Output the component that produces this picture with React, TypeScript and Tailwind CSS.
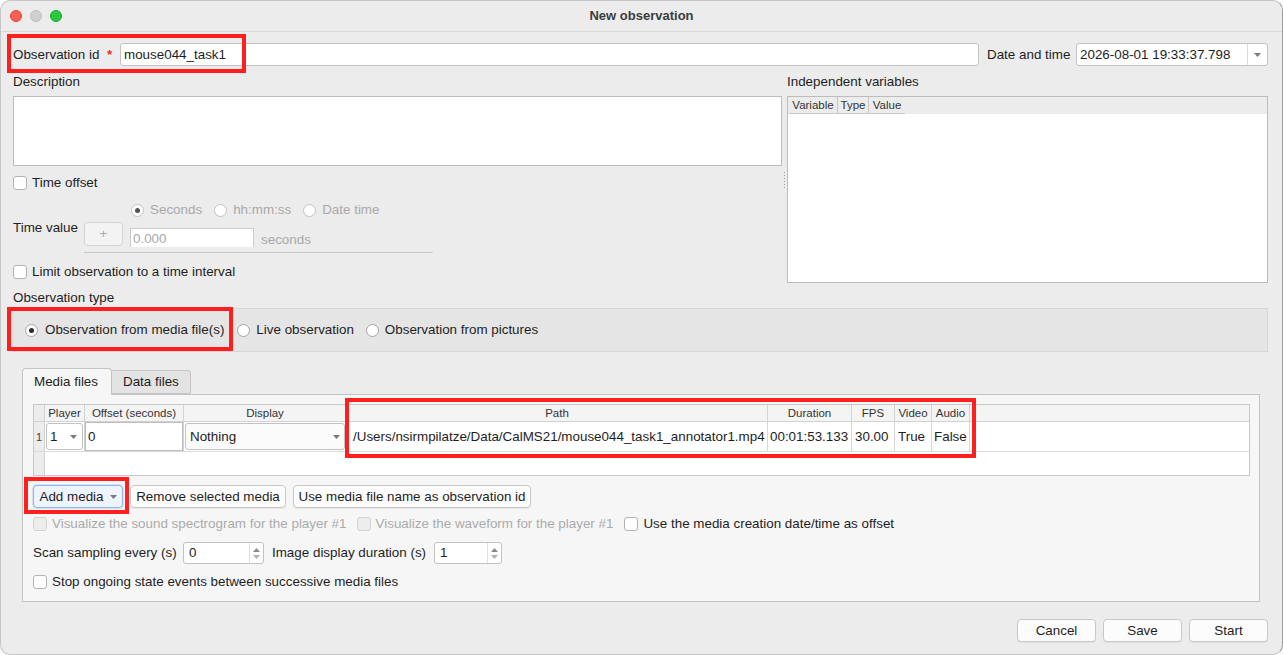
import React from "react";

const Check = ({ disabled = false }: { disabled?: boolean }) => (
  <span
    className={
      "inline-block w-[14px] h-[14px] rounded-[3px] border shrink-0 " +
      (disabled ? "bg-[#ededed] border-[#d2d2d2]" : "bg-white border-[#b3b3b3]")
    }
  />
);

const Radio = ({ checked = false, disabled = false }: { checked?: boolean; disabled?: boolean }) => (
  <span
    className={
      "inline-flex items-center justify-center w-[13px] h-[13px] rounded-full border shrink-0 " +
      (disabled ? "bg-white border-[#c4c4c4]" : "bg-white border-[#a6a6a6]")
    }
  >
    {checked && (
      <span className={"w-[5px] h-[5px] rounded-full " + (disabled ? "bg-[#555]" : "bg-[#2a2a2a]")} />
    )}
  </span>
);

const Caret = ({ className = "" }: { className?: string }) => (
  <svg width="7" height="4" viewBox="0 0 7 4" className={className}>
    <path d="M0 0 L7 0 L3.5 4 Z" fill="#7a7a7a" />
  </svg>
);

const SpinArrows = () => (
  <div className="flex flex-col items-center justify-center gap-[3px] w-[14px] h-full border-l border-[#e0e0e0]">
    <svg width="7" height="4" viewBox="0 0 7 4">
      <path d="M0 4 L7 4 L3.5 0 Z" fill="#8a8a8a" />
    </svg>
    <svg width="7" height="4" viewBox="0 0 7 4">
      <path d="M0 0 L7 0 L3.5 4 Z" fill="#b0b0b0" />
    </svg>
  </div>
);

const Btn = ({ w, children }: { w: string; children: React.ReactNode }) => (
  <div
    className={
      "h-[23px] flex items-center justify-center rounded-[4px] border border-[#c8c8c8] bg-[#fcfcfc] shadow-[0_1px_0_rgba(0,0,0,0.05)] whitespace-nowrap " +
      w
    }
  >
    {children}
  </div>
);

export default function App() {
  return (
    <div className="w-[1283px] h-[655px] bg-white">
      <div className="relative w-[1283px] h-[655px] bg-[#ececec] rounded-[10px] border border-[#c6c6c6] border-r-[#9c9c9c] overflow-hidden text-[13.4px] leading-[16px] text-[#1e1e1e] font-['Liberation_Sans',Arial,sans-serif]">
        {/* Title bar */}
        <div className="h-[31px] grid grid-cols-[1fr_auto_1fr] items-center border-b border-[#d8d8d8]">
          <div className="flex items-center gap-[8px] pl-[9px]">
            <span className="w-[12px] h-[12px] rounded-full bg-[#fe5f57] border border-[#e2463f]" />
            <span className="w-[12px] h-[12px] rounded-full bg-[#cfcfcf] border border-[#bdbdbd]" />
            <span className="w-[12px] h-[12px] rounded-full bg-[#2ac840] border border-[#1eaa30]" />
          </div>
          <div className="font-bold text-[#3c3c3c] text-[13px]">New observation</div>
          <div />
        </div>

        <div className="pl-[12px] pr-[14px]">
          {/* Row 1 */}
          <div className="mt-[11px] h-[23px] flex items-center">
            <span className="w-[94px] whitespace-nowrap">Observation id</span>
            <span className="w-[13px] text-[#e2362c] font-bold">*</span>
            <div className="flex-1 h-[23px] bg-white border border-[#c2c2c2] rounded-[3px] flex items-center pl-[3px]">
              mouse044_task1
            </div>
            <span className="ml-[8px] w-[81px] whitespace-nowrap">Date and time</span>
            <div className="ml-[8px] w-[192px] h-[23px] bg-white border border-[#c2c2c2] rounded-[3px] flex items-center">
              <span className="flex-1 pl-[3px] whitespace-nowrap">2026-08-01 19:33:37.798</span>
              <div className="w-[20px] h-full border-l border-[#dcdcdc] flex items-center justify-center">
                <Caret />
              </div>
            </div>
          </div>

          {/* Row 2 */}
          <div className="mt-[8px] flex">
            <div className="w-[769px] flex flex-col">
              <div className="h-[16px]">Description</div>
              <div className="mt-[6px] h-[70px] bg-white border border-[#bcbcbc]" />
              <div className="mt-[10px] h-[14px] flex items-center gap-[5px]">
                <Check />
                <span>Time offset</span>
              </div>
              <div className="mt-[11px] flex">
                <div className="w-[71px] pt-[19px]">Time value</div>
                <div className="w-[349px] h-[52px] border-b border-[#c9c9c9]">
                  <div className="h-[18px] flex items-center pl-[47px] gap-[12px] text-[#a9a9a9]">
                    <span className="flex items-center gap-[6px]">
                      <Radio checked disabled />
                      Seconds
                    </span>
                    <span className="flex items-center gap-[6px]">
                      <Radio disabled />
                      hh:mm:ss
                    </span>
                    <span className="flex items-center gap-[6px]">
                      <Radio disabled />
                      Date time
                    </span>
                  </div>
                  <div className="mt-[3px] h-[25px] overflow-hidden flex items-start">
                    <div className="w-[39px] h-[24px] rounded-[4px] border border-[#d4d4d4] bg-[#f3f3f3] flex items-center justify-center text-[#a9a9a9]">
                      +
                    </div>
                    <div className="ml-[7px] mt-[6px] w-[124px] h-[24px] bg-white border border-[#cccccc] pl-[2px] pt-[2px] text-[#a9a9a9]">
                      0.000
                    </div>
                    <span className="ml-[7px] mt-[10px] text-[#a9a9a9]">seconds</span>
                  </div>
                </div>
              </div>
              <div className="mt-[12px] h-[14px] flex items-center gap-[5px]">
                <Check />
                <span>Limit observation to a time interval</span>
              </div>
            </div>
            <div className="w-[5px] flex flex-col items-center pt-[98px] gap-[2px]">
              {[0, 1, 2, 3, 4, 5].map((i) => (
                <span key={i} className="w-[1px] h-[1px] bg-[#9a9a9a]" />
              ))}
            </div>
            <div className="w-[481px] flex flex-col">
              <div className="h-[16px]">Independent variables</div>
              <div className="mt-[6px] h-[187px] border border-[#bcbcbc] bg-white flex flex-col">
                <div className="h-[17px] bg-[#ececec] flex pl-[1px] text-[11.5px] text-[#333]">
                  <div className="w-[49px] border-r border-b border-[#c6c6c6] flex items-center justify-center">Variable</div>
                  <div className="w-[31px] border-r border-b border-[#c6c6c6] flex items-center justify-center">Type</div>
                  <div className="w-[36px] border-b border-[#c6c6c6] flex items-center justify-center">Value</div>
                </div>
              </div>
            </div>
          </div>

          {/* Observation type */}
          <div className="mt-[7px] h-[16px]">Observation type</div>
          <div className="mt-[2px] ml-[-1px] h-[44px] bg-[#e5e5e5] border border-[#d6d6d6] flex items-center pl-[12px]">
            <span className="flex items-center gap-[7px]">
              <Radio checked />
              Observation from media file(s)
            </span>
            <span className="ml-[13px] flex items-center gap-[6px]">
              <Radio />
              Live observation
            </span>
            <span className="ml-[12px] flex items-center gap-[6px]">
              <Radio />
              Observation from pictures
            </span>
          </div>

          {/* Tab widget */}
          <div className="mt-[16px] ml-[9px] w-[1238px]">
            <div className="h-[26px] flex items-end">
              <div className="relative z-10 w-[90px] h-[27px] mb-[-1px] bg-[#f6f6f6] border border-b-0 border-[#c4c4c4] rounded-t-[4px] pl-[11px] flex items-center">
                Media files
              </div>
              <div className="w-[79px] h-[24px] bg-[#e3e3e3] border border-l-0 border-[#c4c4c4] rounded-tr-[4px] pl-[11px] flex items-center">
                Data files
              </div>
            </div>
            <div className="h-[208px] bg-[#f6f6f6] border border-[#c4c4c4] flex flex-col pl-[10px] pr-[9px]">
              {/* Media table */}
              <div className="mt-[9px] h-[72px] border border-[#c8c8c8] bg-white flex flex-col">
                <div className="h-[17px] flex bg-[#f4f4f4] border-b border-[#d2d2d2] text-[11.5px] text-[#333] whitespace-nowrap">
                  <div className="w-[11px] border-r border-[#d2d2d2] bg-[#ececec]" />
                  <div className="w-[40px] border-r border-[#d2d2d2] flex items-center justify-center">Player</div>
                  <div className="w-[99px] border-r border-[#d2d2d2] flex items-center justify-center">Offset (seconds)</div>
                  <div className="w-[163px] border-r border-[#d2d2d2] flex items-center justify-center">Display</div>
                  <div className="w-[421px] border-r border-[#d2d2d2] flex items-center justify-center">Path</div>
                  <div className="w-[84px] border-r border-[#d2d2d2] flex items-center justify-center">Duration</div>
                  <div className="w-[43px] border-r border-[#d2d2d2] flex items-center justify-center">FPS</div>
                  <div className="w-[37px] border-r border-[#d2d2d2] flex items-center justify-center">Video</div>
                  <div className="w-[38px] border-r border-[#d2d2d2] flex items-center justify-center">Audio</div>
                </div>
                <div className="h-[30px] flex border-b border-[#dadada] whitespace-nowrap">
                  <div className="w-[11px] bg-[#ececec] border-r border-[#d2d2d2] flex items-center justify-center text-[11px] text-[#444]">
                    1
                  </div>
                  <div className="w-[40px] border-r border-[#d2d2d2] p-[1px] flex">
                    <div className="flex-1 bg-white border border-[#c2c2c2] rounded-[3px] flex items-center pl-[3px]">
                      <span className="flex-1">1</span>
                      <Caret className="mr-[5px]" />
                    </div>
                  </div>
                  <div className="w-[99px] border-r border-[#d2d2d2] flex">
                    <div className="flex-1 bg-white border border-[#bdbdbd] flex items-center pl-[2px]">0</div>
                  </div>
                  <div className="w-[163px] border-r border-[#d2d2d2] px-[1px] py-[1px] flex">
                    <div className="flex-1 bg-[#fbfbfb] border border-[#c2c2c2] rounded-[3px] flex items-center pl-[4px]">
                      <span className="flex-1">Nothing</span>
                      <Caret className="mr-[4px]" />
                    </div>
                  </div>
                  <div className="w-[421px] border-r border-[#d8d8d8] flex items-center pl-[6px] overflow-hidden">
                    /Users/nsirmpilatze/Data/CalMS21/mouse044_task1_annotator1.mp4
                  </div>
                  <div className="w-[84px] border-r border-[#d8d8d8] flex items-center pl-[2px] overflow-hidden">
                    00:01:53.133
                  </div>
                  <div className="w-[43px] border-r border-[#d8d8d8] flex items-center pl-[3px]">30.00</div>
                  <div className="w-[37px] border-r border-[#d8d8d8] flex items-center pl-[3px]">True</div>
                  <div className="w-[38px] border-r border-[#d8d8d8] flex items-center pl-[2px]">False</div>
                </div>
                <div className="flex-1 flex">
                  <div className="w-[11px] bg-[#ececec] border-r border-[#d2d2d2]" />
                </div>
              </div>

              {/* Buttons */}
              <div className="mt-[9px] flex gap-[7px]">
                <div className="w-[90px] h-[23px] rounded-[4px] border border-[#8fb6ea] bg-[#eef4fd] flex items-center justify-center gap-[6px] shadow-[0_0_0_1px_rgba(120,165,230,0.25)]">
                  <span>Add media</span>
                  <Caret />
                </div>
                <Btn w="w-[156px]">Remove selected media</Btn>
                <Btn w="w-[238px]">Use media file name as observation id</Btn>
              </div>

              {/* Checkbox row */}
              <div className="mt-[9px] h-[14px] flex items-center whitespace-nowrap">
                <span className="flex items-center gap-[5px] text-[#ababab]">
                  <Check disabled />
                  Visualize the sound spectrogram for the player #1
                </span>
                <span className="ml-[10px] flex items-center gap-[5px] text-[#ababab]">
                  <Check disabled />
                  Visualize the waveform for the player #1
                </span>
                <span className="ml-[11px] flex items-center gap-[5px]">
                  <Check />
                  Use the media creation date/time as offset
                </span>
              </div>

              {/* Spin row */}
              <div className="mt-[11px] h-[22px] flex items-center whitespace-nowrap">
                <span className="w-[150px]">Scan sampling every (s)</span>
                <div className="w-[81px] h-[22px] bg-white border border-[#c2c2c2] rounded-[3px] flex items-center">
                  <span className="flex-1 pl-[5px]">0</span>
                  <SpinArrows />
                </div>
                <span className="ml-[8px] w-[162px]">Image display duration (s)</span>
                <div className="w-[68px] h-[22px] bg-white border border-[#c2c2c2] rounded-[3px] flex items-center">
                  <span className="flex-1 pl-[5px]">1</span>
                  <SpinArrows />
                </div>
              </div>

              {/* Stop checkbox */}
              <div className="mt-[11px] h-[14px] flex items-center gap-[5px]">
                <Check />
                <span>Stop ongoing state events between successive media files</span>
              </div>
            </div>
          </div>

          {/* Bottom buttons */}
          <div className="mt-[17px] flex justify-end gap-[7px]">
            <Btn w="w-[79px]">Cancel</Btn>
            <Btn w="w-[79px]">Save</Btn>
            <Btn w="w-[79px]">Start</Btn>
          </div>
        </div>

        {/* Red annotation boxes */}
        <div className="absolute left-[6px] top-[33px] w-[239px] h-[39px] border-[4px] border-[#ff1f1f]" />
        <div className="absolute left-[6px] top-[306px] w-[226px] h-[44px] border-[4px] border-[#ff1f1f]" />
        <div className="absolute left-[344px] top-[397px] w-[631px] h-[60px] border-[4px] border-[#ff1f1f]" />
        <div className="absolute left-[23px] top-[476px] w-[105px] h-[37px] border-[4px] border-[#ff1f1f]" />
      </div>
    </div>
  );
}
